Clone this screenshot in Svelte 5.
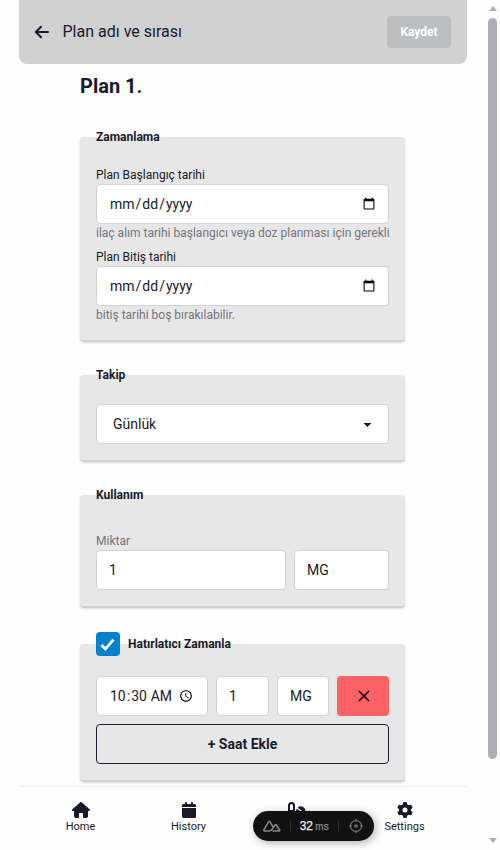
<script>
  let startDate = $state('');
  let endDate = $state('');
  let period = $state('Günlük');
  let amount = $state('1');
  let unit = $state('MG');
  let time = $state('10:30');
  let dose = $state('1');
  let doseUnit = $state('MG');
</script>

<div class="page">
  <main class="screen">
    <header>
      <svg class="back" viewBox="0 0 16 14" width="16" height="14"><path d="M14 7H2M7 1.8 1.8 7 7 12.2" /></svg>
      <h1>Plan adı ve sırası</h1>
      <button class="save" disabled>Kaydet</button>
    </header>

    <div class="content">
      <h2>Plan 1.</h2>

      <section class="card dates">
        <div class="legend">Zamanlama</div>
        <label for="start">Plan Başlangıç tarihi</label>
        <input id="start" type="date" bind:value={startDate} />
        <p class="hint">ilaç alım tarihi başlangıcı veya doz planması için gerekli</p>
        <label for="end">Plan Bitiş tarihi</label>
        <input id="end" type="date" bind:value={endDate} />
        <p class="hint">bitiş tarihi boş bırakılabilir.</p>
      </section>

      <section class="card tracking">
        <div class="legend">Takip</div>
        <select bind:value={period}><option>Günlük</option></select>
      </section>

      <section class="card usage">
        <div class="legend">Kullanım</div>
        <label class="muted" for="amount">Miktar</label>
        <div class="row">
          <input id="amount" class="amount" type="text" bind:value={amount} />
          <input class="unit" type="text" bind:value={unit} />
        </div>
      </section>

      <section class="card reminder">
        <div class="legend checked">
          <span class="check"><svg viewBox="0 0 24 24" width="24" height="24"><path d="m5.4 13.1 4.1 3.8 8-9.2" /></svg></span>
          Hatırlatıcı Zamanla
        </div>
        <div class="row">
          <input class="time" type="time" bind:value={time} />
          <input class="small" type="text" bind:value={dose} />
          <input class="small" type="text" bind:value={doseUnit} />
          <button class="remove" aria-label="Sil"><svg viewBox="0 0 12 12" width="12" height="12"><path d="m1 1 10 10M11 1 1 11" /></svg></button>
        </div>
        <button class="add">+ Saat Ekle</button>
      </section>
    </div>

    <nav>
      <div class="tab">
        <svg viewBox="0 0 576 512" width="18" height="16"><path d="M575.8 255.5c0 18-15 32.100-32 32.100h-32l.7 160.200c0 35-28 64.200-63 64.200h-58c-22 0-40-18-40-40v-88c0-18-14-32-32-32h-64c-18 0-32 14-32 32v88c0 22-18 40-40 40h-56c-35 0-63-28-63-64V287.600H32c-18 0-32-14-32-32 0-9 3-17 10-24L266.400 8c7-7 15-8 22-8s15 2 21 7l255.400 224.500c8 7 12 15 11 24z" /></svg>
        <span>Home</span>
      </div>
      <div class="tab">
        <svg viewBox="0 0 448 512" width="16" height="16"><path d="M96 32v32H48C21.500 64 0 85.500 0 112v48h448v-48c0-26.500-21.500-48-48-48h-48V32c0-17.700-14.300-32-32-32s-32 14.300-32 32v32H160V32c0-17.700-14.300-32-32-32S96 14.300 96 32zM448 192H0v272c0 26.500 21.500 48 48 48h352c26.500 0 48-21.500 48-48V192z" /></svg>
        <span>History</span>
      </div>
      <div class="tab">
        <svg viewBox="0 0 18 16" width="18" height="16"><path fill-rule="evenodd" d="M0 3.500a3.500 3.500 0 0 1 7 0v9a3.500 3.500 0 0 1-7 0zM2 3.500V8h3V3.500a1.500 1.500 0 0 0-3 0zM9.600 5.800A4.500 4.500 0 0 1 16.800 11zM8.800 6.700A4.500 4.500 0 0 0 16 12z" /></svg>
      </div>
      <div class="tab">
        <svg viewBox="0 0 512 512" width="16" height="16"><path d="M495.900 166.600c3.200 8.700.5 18.400-6.400 24.600l-43.300 39.400c1.100 8.300 1.700 16.800 1.700 25.400s-.6 17.100-1.700 25.400l43.300 39.400c6.900 6.200 9.600 15.900 6.400 24.600-4.400 11.900-9.700 23.300-15.800 34.300l-4.700 8.100c-6.600 11-14 21.400-22.100 31.200-5.900 7.200-15.700 9.600-24.500 6.800l-55.700-17.700c-13.400 10.300-28.200 18.900-44 25.400l-12.500 57.100c-2 9.100-9 16.300-18.200 17.800-28.600 4.800-56.400 4.800-85 0-9.200-1.500-16.200-8.700-18.200-17.800l-12.500-57.100c-15.800-6.500-30.600-15.100-44-25.400L83.100 425.900c-8.800 2.800-18.600.3-24.500-6.800-8.100-9.800-15.500-20.200-22.100-31.200l-4.700-8.100c-6.100-11-11.400-22.400-15.800-34.300-3.200-8.700-.5-18.400 6.400-24.600l43.300-39.400C64.600 273.100 64 264.600 64 256s.6-17.100 1.700-25.400L22.400 191.200c-6.900-6.200-9.600-15.900-6.400-24.600 4.400-11.900 9.700-23.300 15.800-34.300l4.700-8.100c6.600-11 14-21.400 22.100-31.200 5.900-7.200 15.700-9.600 24.500-6.800l55.700 17.700c13.400-10.300 28.200-18.900 44-25.400l12.500-57.100c2-9.100 9-16.300 18.200-17.800 28.600-4.800 56.400-4.800 85 0 9.200 1.500 16.200 8.700 18.200 17.800l12.500 57.100c15.800 6.500 30.600 15.100 44 25.400l55.700-17.700c8.800-2.800 18.600-.3 24.500 6.800 8.100 9.800 15.500 20.200 22.100 31.200l4.700 8.100c6.100 11 11.400 22.400 15.800 34.300zM256 336a80 80 0 1 0 0-160 80 80 0 1 0 0 160z" /></svg>
        <span>Settings</span>
      </div>
    </nav>
  </main>

  <div class="scrollbar">
    <i class="up"></i>
    <div class="thumb"></div>
    <i class="down"></i>
  </div>

  <div class="devtools">
    <svg class="nuxt" viewBox="0 0 18 12" width="18" height="12"><path d="M6.300 11H1.500c-.6 0-.9-.6-.6-1.100L5.600 1.700c.3-.6 1-.6 1.300 0l3.400 5.600M6.300 11c2.200 0 2.900-1.400 3.800-3l1.900-3.200c.3-.5.900-.5 1.200 0l3.400 5.200c.3.500 0 1-.6 1H9.500" /></svg>
    <b></b>
    <span class="speed">32 <small>ms</small></span>
    <b></b>
    <svg class="target" viewBox="0 0 16 16" width="16" height="16"><circle cx="8" cy="8" r="5.500" /><circle class="dot" cx="8" cy="8" r="1.200" /><path d="M8 .8v3M8 12.200v3M.8 8h3M12.200 8h3" /></svg>
  </div>
</div>

<style>
  :global(body) { margin: 0; overflow: hidden; }
  * { box-sizing: border-box; }
  .page {
    position: relative;
    display: flex;
    width: 500px;
    height: 850px;
    background: #fefefe;
    color: #181a2a;
    font: 14px/20px Roboto, sans-serif;
    overflow: hidden;
  }
  .screen { width: 448px; height: 850px; margin-left: 19px; display: flex; flex-direction: column; }
  header {
    height: 64px;
    flex: none;
    display: flex;
    align-items: center;
    padding: 0 16px 0 15px;
    background: #d1d1d1;
    border-radius: 0 0 8px 8px;
  }
  .back { fill: none; stroke: #181a2a; stroke-width: 2; stroke-linecap: round; stroke-linejoin: round; }
  h1 { flex: 1; margin: 0 0 0 12.500px; font-size: 16px; line-height: 24px; font-weight: 400; }
  button { font-family: inherit; padding: 0; }
  .save { width: 64px; height: 32px; border: 0; border-radius: 4px; background: #bcbec0; color: #fff; font-size: 12px; font-weight: 700; }
  .content { flex: none; height: 722px; width: 325px; margin-left: 61px; padding-top: 8px; }
  h2 { margin: 0; font-size: 20px; line-height: 28px; font-weight: 700; }
  .card {
    display: flow-root;
    background: #e7e7e7;
    border-radius: 4px;
    border-bottom: 2px solid #d1d1d1;
    padding: 0 16px;
    box-shadow: 0 1px 3px rgba(0, 0, 0, .08), 0 1px 2px rgba(0, 0, 0, .06);
  }
  .dates { height: 205px; margin-top: 37px; }
  .tracking { height: 87px; margin-top: 33px; }
  .usage { height: 113px; margin-top: 33px; }
  .reminder { height: 138px; margin-top: 36px; }
  .legend { height: 16px; line-height: 16px; font-size: 12px; font-weight: 700; transform: translateY(-8px); }
  .checked { height: 24px; display: flex; align-items: center; gap: 8px; transform: translateY(-12px); }
  .check { width: 24px; height: 24px; border-radius: 4px; background: #0082ce; }
  .check svg { display: block; fill: none; stroke: #fff; stroke-width: 2.800; }
  label { display: block; font-size: 12px; line-height: 16px; }
  .dates .legend + label { margin-top: 14px; }
  .hint { margin: 0; padding-top: 1px; font-size: 12px; line-height: 16px; color: #747581; white-space: nowrap; }
  .hint + label { margin-top: 8px; }
  .dates label { height: 17px; }
  .muted { color: #747581; margin-top: 22px; margin-bottom: 1px; }
  input, select {
    display: block;
    width: 293px;
    height: 40px;
    margin: 0;
    padding: 0 12px;
    border: 1px solid #d1d1d1;
    border-radius: 4px;
    background: #fff;
    color: #181a2a;
    font: 14px/20px Roboto, sans-serif;
    outline: 0;
  }
  input::-webkit-calendar-picker-indicator { margin-right: -2px; }
  .time::-webkit-calendar-picker-indicator { margin-left: 4px; }
  select {
    appearance: none;
    margin-top: 13px;
    padding-left: 16px;
    background-image: linear-gradient(45deg, transparent 50%, currentColor 50%), linear-gradient(135deg, currentColor 50%, transparent 50%);
    background-position: calc(100% - 20px) calc(1px + 50%), calc(100% - 16.100px) calc(1px + 50%);
    background-size: 4px 4px;
    background-repeat: no-repeat;
  }
  .row { display: flex; gap: 8px; }
  .amount { width: 190px; }
  .unit { width: 95px; }
  .reminder .row { margin-top: 8px; }
  .time { width: 112px; }
  .small { width: 53px; }
  .small + .small { width: 52px; }
  .remove { width: 52px; height: 40px; border: 0; border-radius: 4px; background: #ff6266; display: grid; place-items: center; padding-left: 1px; }
  .remove svg { stroke: #120002; stroke-width: 1.600; }
  .add { display: block; width: 293px; height: 40px; margin-top: 8px; border: 1px solid #181a2a; border-radius: 4px; background: transparent; color: #181a2a; font-size: 14px; font-weight: 700; }
  nav { height: 64px; border-top: 1px solid #f0f0f0; display: flex; padding: 0 7.500px; }
  .tab { width: 108px; padding-top: 15px; display: flex; flex-direction: column; align-items: center; }
  .tab svg { display: block; fill: #181a2a; }
  .tab span { font-size: 11px; line-height: 16px; margin-top: 1px; }
  .scrollbar { width: 12px; margin-left: auto; display: flex; flex-direction: column; align-items: center; height: 850px; padding: 6px 3px 7px 0; }
  .thumb { width: 9px; height: 741px; margin-top: 7px; border-radius: 5px; background: #adafb5; }
  .up { border: 4.500px solid transparent; border-top: 0; border-bottom: 5px solid #adafb5; }
  .down { margin-top: auto; border: 4.500px solid transparent; border-bottom: 0; border-top: 5px solid #adafb5; }
  .devtools {
    position: absolute;
    left: 252.700px;
    top: 811px;
    width: 121px;
    height: 30px;
    border-radius: 15px;
    background: #111;
    display: flex;
    align-items: center;
    padding: 0 10px;
    justify-content: space-between;
    color: #eee;
    box-shadow: 2px 2px 8px rgba(0, 0, 0, .3);
    font-family: "Liberation Sans", sans-serif;
  }
  .devtools svg { fill: none; stroke: #858585; stroke-width: 1.600; }
  .devtools .target { stroke: #777; stroke-width: 1.200; }
  .devtools b { width: 1px; height: 10px; background: #2b2b2b; }
  .speed { font-size: 12px; line-height: 16px; -webkit-text-stroke: .25px currentColor; }
  .speed small { font-size: 10px; color: #8b8b8b; margin-left: -1px; }
</style>
